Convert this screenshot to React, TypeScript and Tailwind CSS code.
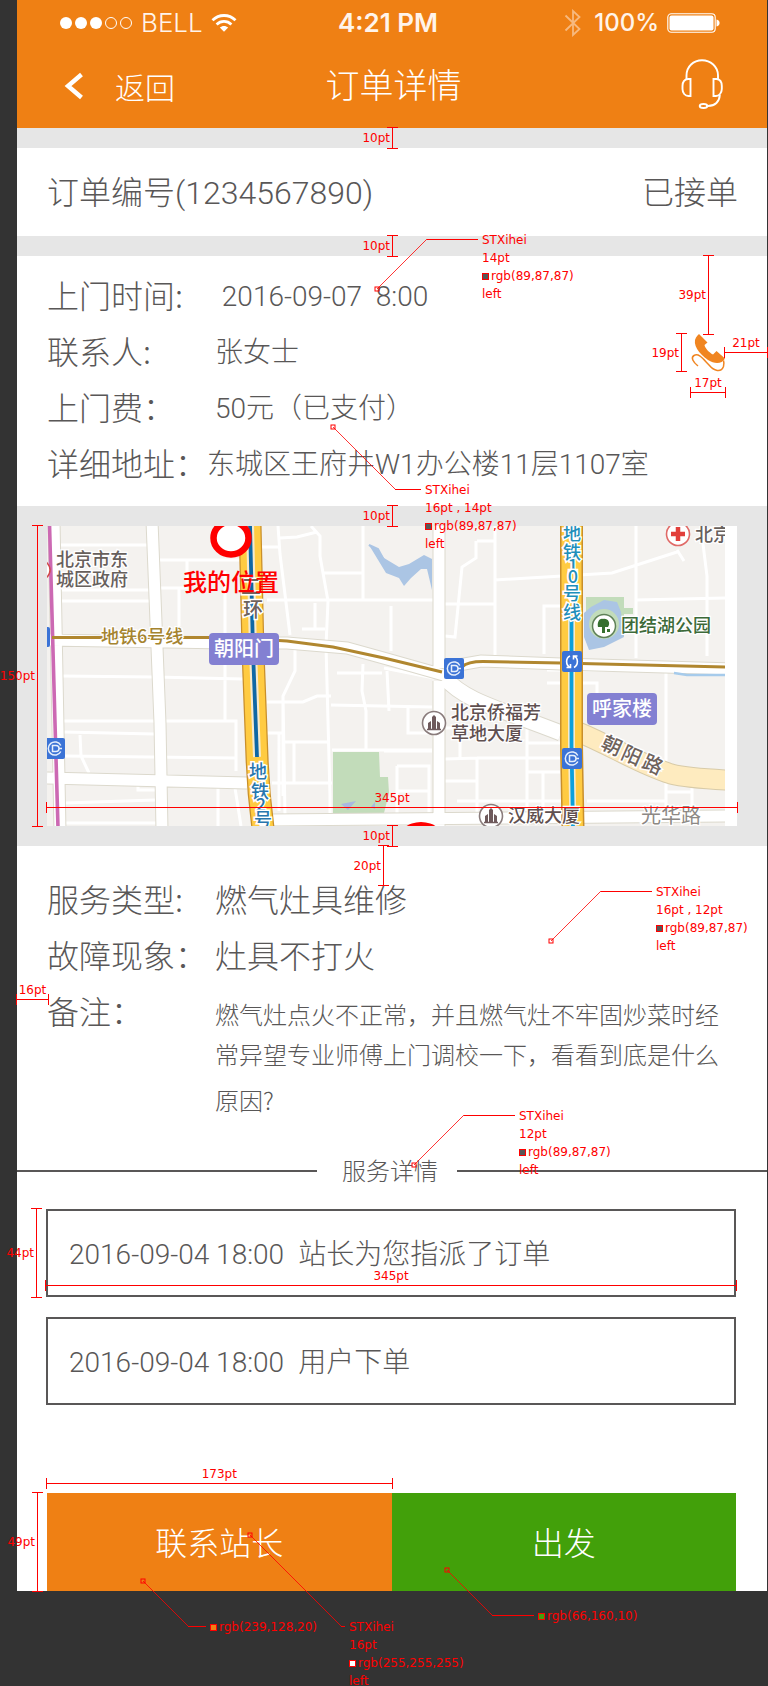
import React from "react";

/* ---------- design-spec annotations ---------- */

function VMark({ label, className }: { label: string; className: string }) {
  return (
    <div className={`pointer-events-none absolute z-10 flex items-center justify-end ${className}`}>
      <span className="-mr-[3px] shrink-0 font-['DejaVu_Sans',sans-serif] text-xs font-normal text-[#ff0000]">{label}</span>
      <span className="flex w-[11px] shrink-0 justify-center self-stretch border-y border-[#ff0000]">
        <span className="w-px bg-[#ff0000]" />
      </span>
    </div>
  );
}

function HMark({ label, className }: { label: string; className: string }) {
  return (
    <div className={`pointer-events-none absolute z-10 flex flex-col items-center ${className}`}>
      <span className="-mb-[3px] font-['DejaVu_Sans',sans-serif] text-xs leading-[14px] font-normal text-[#ff0000]">{label}</span>
      <span className="flex h-[11px] w-full items-center border-x border-[#ff0000]">
        <span className="h-px w-full bg-[#ff0000]" />
      </span>
    </div>
  );
}

type CalloutProps = {
  className: string;
  lines: string[];
  swatch: string;
  rise: number;
  run: number;
  down?: boolean;
};

function Callout({ className, lines, swatch, rise, run, down = false }: CalloutProps) {
  const w = rise + run + 3;
  const h = rise + 6;
  const y0 = down ? 3 : h - 3;
  const y1 = down ? rise + 3 : 3;
  return (
    <div className={`pointer-events-none absolute z-10 flex items-start gap-1 ${className}`}>
      <svg width={w} height={h} className="shrink-0" fill="none" stroke="#ff0000">
        <path d={`M3 ${y0}L${rise + 3} ${y1}`} strokeWidth="0.8" />
        <path d={`M${rise + 3} ${y1 + 0.5}H${w}`} />
        <rect x="1" y={y0 - 2} width="4" height="4" />
      </svg>
      <div
        className="font-['DejaVu_Sans',sans-serif] text-xs leading-[18px] font-normal whitespace-nowrap text-[#ff0000]"
        style={{ marginTop: y1 - 8 }}
      >
        {lines.map((line) =>
          line.startsWith("rgb") ? (
            <div key={line} className="flex items-center gap-0.5">
              <span className={`size-[7px] border border-[#ff0000] ${swatch}`} />
              <span>{line}</span>
            </div>
          ) : (
            <div key={line}>{line}</div>
          ),
        )}
      </div>
    </div>
  );
}

const GRAY_SPEC = "bg-[#595757]";

function GapBar() {
  return (
    <div className="relative h-5 bg-[#e6e6e6]">
      <VMark label="10pt" className="-inset-y-px right-[calc(50%-6px)]" />
    </div>
  );
}

/* ---------- header ---------- */

function StatusBar() {
  return (
    <div className="flex h-[46px] items-center pr-[50px] pl-[42px] font-[Inter,sans-serif] text-2xl text-[#fff4ea]">
      <div className="flex flex-1 items-center gap-2">
        <svg width="74" height="14" viewBox="0 0 74 14">
          <g fill="#fff">
            <circle cx="7" cy="7" r="6" />
            <circle cx="22" cy="7" r="6" />
            <circle cx="37" cy="7" r="6" />
          </g>
          <g fill="none" stroke="#fff">
            <circle cx="52" cy="7" r="5.5" />
            <circle cx="67" cy="7" r="5.5" />
          </g>
        </svg>
        <span className="text-[26px] font-light">BELL</span>
        <svg width="26" height="20" viewBox="0 0 26 20" fill="none" stroke="#fff" strokeWidth="2.8">
          <path d="M1.5 7.2C8 0.9 18 0.9 24.5 7.2" />
          <path d="M5.6 11.4C9.8 7.4 16.2 7.4 20.4 11.4" />
          <path d="M8.8 14.6C11.2 12.4 14.8 12.4 17.2 14.6L13 18.8Z" fill="#fff" stroke="none" />
        </svg>
      </div>
      <span className="text-[26px] font-semibold">4:21 PM</span>
      <div className="flex flex-1 items-center justify-end gap-2">
        <svg width="18" height="28" viewBox="0 0 18 28" fill="none" stroke="#f7b97f" strokeWidth="1.8" className="mr-1">
          <path d="M1.5 6.5L15.5 20L9 26V2L15.5 8L1.5 21.5" />
        </svg>
        <span className="font-medium">100%</span>
        <svg width="54" height="20" viewBox="0 0 54 20" className="-mr-1">
          <rect x="0.8" y="0.8" width="47.4" height="18.4" rx="3.5" fill="none" stroke="#fff" strokeWidth="1.1" />
          <rect x="2.5" y="2.5" width="44" height="15" rx="2" fill="#fff" />
          <path d="M49.5 6.5C53.6 7 53.6 13 49.5 13.5Z" fill="#fff" />
        </svg>
      </div>
    </div>
  );
}

function Header() {
  return (
    <header className="h-32 bg-[#ef8014] text-white">
      <StatusBar />
      <div className="flex h-20 items-center pr-[44px] pl-[47px]">
        <div className="flex flex-1">
          <button type="button" className="flex items-center gap-[31px] text-[30px] leading-10">
            <svg width="20" height="28" viewBox="0 0 20 28" fill="none" stroke="#fff" strokeWidth="4.4">
              <path d="M17.5 2.5L4 14L17.5 25.5" />
            </svg>
            返回
          </button>
        </div>
        <h1 className="pb-1 text-[34px] leading-10 font-light">订单详情</h1>
        <div className="flex flex-1 justify-end">
          <button type="button" aria-label="客服" className="pb-1">
            <svg width="42" height="50" viewBox="0 0 42 50" fill="none" stroke="#fff" strokeWidth="1.9">
              <path d="M5.5 20V16.5C5.5 7.5 12.5 1.2 21 1.2S37 7.5 37 16.5V20" />
              <path d="M9.5 20H7C3 20.5 1.5 24 1.5 27V30C1.5 34 4 37 7.5 37H9.5Z" />
              <path d="M32.5 20H35.5C39.5 20.5 40.8 24 40.8 27V30C40.8 34 38 37 35 37H32.5Z" />
              <path d="M38.8 36C38.5 42.5 34 47 27 47H25" />
              <ellipse cx="22.5" cy="47" rx="3.8" ry="2" />
            </svg>
          </button>
        </div>
      </div>
    </header>
  );
}

/* ---------- map ---------- */

function Metro({ x, y }: { x: number; y: number }) {
  return (
    <g transform={`translate(${x} ${y})`}>
      <rect width="20" height="21" rx="2" fill="#3b73d6" />
      <g fill="none" stroke="#e6effc" strokeWidth="1.5">
        <path d="M15.8 7.5A6.6 6.6 0 1 0 15.8 13.5" />
        <path d="M7.5 7.5H11A3 3 0 0 1 11 13.5H7.5ZM13.5 10.5H17" />
      </g>
    </g>
  );
}

function Building({ x, y }: { x: number; y: number }) {
  return (
    <g transform={`translate(${x} ${y})`}>
      <circle r="11.5" fill="#fff" stroke="#8a7c7c" strokeWidth="1.6" />
      <path d="M-6 6V0L-3 -2V6ZM-2 6V-6L0 -8L2 -6V6ZM3 6V-2L6 0V6Z" fill="#6f5a5c" />
      <path d="M-7 6.5H7" stroke="#6f5a5c" strokeWidth="1.5" />
    </g>
  );
}

const COLUMN_LEFT = [
  { t: "地", x: 211, y: 252 },
  { t: "铁", x: 213, y: 272 },
  { t: "2", x: 214, y: 285 },
  { t: "号", x: 216, y: 300 },
];
const COLUMN_RIGHT = [
  { t: "地", x: 525, y: 14 },
  { t: "铁", x: 525, y: 33 },
  { t: "1", x: 526, y: 46 },
  { t: "0", x: 526, y: 57 },
  { t: "号", x: 525, y: 74 },
  { t: "线", x: 525, y: 93 },
];

const MAJOR =
  "M7 -5L13 305M105 -5L113 197L115 305M392 -5V142M392 155V305M0 252L200 257M222 294L690 290M0 114L180 117L240 117L300 122L340 133L400 150M400 141L434 135L514 138L690 143";

const MINOR =
  "M9 19H100M10 64H104M10 75H103M110 34H193M140 34V62H112M132 62V100M178 45V195M14 150L108 151L196 153M15 195H189V245M17 206L107 208M33 209L34 230L42 247M18 230L188 232M18 277L108 274M18 297H110M171 262V300M188 262L194 300M91 260V264H110" +
  "M215 21H232M231 0L233 28L243 109M233 12L250 11L270 6M264 0L273 10V30L281 75L279 120M316 0V75M275 47H316M220 74H387M268 77V102M255 103H278M279 120L283 270V300M248 122V145L236 170V270M220 176H256L270 170H284M236 170L238 290M220 207H235M232 207V285M247 216V256M236 216H283M225 257H285M290 147H335M284 179L385 181M316 138L315 165L319 185V225M285 224L385 224" +
  "M398 78H448M448 0V130M430 15H448M429 15V32L415 41L408 111L398 110M448 54L565 47L630 26M630 24L637 35M589 0V132M589 74L678 72M655 10L660 50V130M514 80H497V128M344 80V125M340 145L342 185M337 225H385M398 233L430 232V292M413 207V233M398 255H430M398 202H430M430 232H513M480 202V290M480 217H513M480 246H513M496 246V290M337 142L387 152M361 182V207H387M350 240V290M350 240H382V290M350 265H382M410 275H514M500 157H550V185M619 144V290M500 144H678M645 260V290M619 266H646M540 275H620";

function CityMap() {
  return (
    <svg
      viewBox="0 0 678 300"
      preserveAspectRatio="xMidYMid slice"
      className="block h-[300px] w-full bg-[#f4f2ef] font-['Noto_Sans_CJK_SC',sans-serif] font-medium"
      fill="none"
    >
      <path d="M322 19L331 24L337 32L352 41L362 38L377 29L385 33V64L380 43L374 43L364 52L357 60L352 52L339 47Z" fill="#abc5e4" />
      <path d="M322 19L331 23L337 34L330 25Z" stroke="#abc5e4" strokeWidth="2" />
      <path d="M286 226H332L333 251H341L342 267L337 287H286Z" fill="#c2dcba" />
      <path d="M539 71H577V82H586V88H577V110H539Z" fill="#c2dcba" />
      <path d="M544 81L557 74L570 76L574 86L577 111L557 121L542 124L537 111V87Z" fill="#abc5e4" />
      <circle cx="557" cy="98" r="15" fill="#c2dcba" />
      <path d="M294 278L309 275L301 284ZM324 281L328 276V283Z" fill="#a9b9df" />

      <path d={MINOR} stroke="#fff" strokeWidth="3" />
      <path d={MAJOR} stroke="#dcd9cd" strokeWidth="13" />
      <path d="M398 152C418 175 450 182 514 207" stroke="#dcd9cd" strokeWidth="17" />
      <path d={MAJOR} stroke="#fff" strokeWidth="11" />
      <path d="M398 152C418 175 450 182 514 207" stroke="#fff" strokeWidth="15" />
      <path d="M531 206C565 220 592 238 624 248C640 252 660 253 680 254" stroke="#d8cba8" strokeWidth="21" />
      <path d="M531 206C565 220 592 238 624 248C640 252 660 253 680 254" stroke="#feebbf" strokeWidth="19" />
      <path d="M627 147L640 149H678" stroke="#a6cbeb" strokeWidth="2.5" />

      <path d="M2.5 -2L8 197L11 302" stroke="#cc69b3" strokeWidth="3.6" />
      <path d="M5 111.5H180L240 115L286 121L337 132L395 146" stroke="#b0872f" strokeWidth="3" />
      <path d="M415 141C420 136 428 135.5 436 135.5L514 137L678 141" stroke="#b0872f" strokeWidth="3" />

      <path d="M203 -2L206 125L210 231C211 260 213 280 216 302" stroke="#c98f2a" strokeWidth="23" />
      <path d="M203 -2L206 125L210 231C211 260 213 280 216 302" stroke="#ffcb42" strokeWidth="20.5" />
      <path d="M203 -2L206 125L210 231" stroke="#f5ead0" strokeWidth="8" />
      <path d="M203 -2L206 125L210 231" stroke="#0e67a5" strokeWidth="3.8" />
      <path d="M524.5 -2V220L526 302" stroke="#c98f2a" strokeWidth="23" />
      <path d="M524.5 -2V220L526 302" stroke="#ffcb42" strokeWidth="20" />
      <path d="M524.5 90V220L526 302" stroke="#f5ead0" strokeWidth="7" />
      <path d="M524.5 90V220L526 302" stroke="#0ba0dc" strokeWidth="3.8" />

      <rect x="-17" y="101" width="20" height="20" rx="2" fill="#3b73d6" />
      <Metro x={-2} y={212} />
      <Metro x={397} y={132} />
      <Metro x={515} y={222} />
      <rect x="515" y="125" width="20" height="21" rx="2" fill="#3b73d6" />
      <path
        d="M523 130C518.5 132 518.5 139 523 141.5M519.5 141.5H523.5V138M527 141.5C531.5 139 531.5 132 527 130M530.5 130H526.5V133.5"
        stroke="#fff"
        strokeWidth="1.6"
      />

      <circle cx="-7" cy="44" r="10" fill="#fff" stroke="#d1494b" strokeWidth="1.5" />
      <circle cx="631" cy="8" r="11.5" fill="#fff" stroke="#e06a67" strokeWidth="1.6" />
      <path d="M631 1V15M624 8H638" stroke="#e23f3b" strokeWidth="4.5" />
      <Building x={387} y={197} />
      <Building x={444} y={290} />
      <circle cx="557" cy="100" r="11.5" fill="#fff" stroke="#5f8058" strokeWidth="1.5" />
      <path d="M556 93C552 92 550 97 551 101H555V107H558V101H561C564 97 561 92 556 93ZM560 103H563V106H560Z" fill="#36702f" />

      <g fontSize="18" fill="#67605c" stroke="#fff" strokeWidth="2.5" paintOrder="stroke">
        <text x="9" y="40">北京市东</text>
        <text x="9" y="60">城区政府</text>
        <text x="404" y="193" fill="#5f5050">北京侨福芳</text>
        <text x="404" y="214" fill="#5f5050">草地大厦</text>
        <text x="461" y="296" fill="#5f5050">汉威大厦</text>
        <text x="648" y="15">北京</text>
        <text x="574" y="106" fill="#3d6a39">团结湖公园</text>
        <text x="54" y="117" fill="#a5842f">地铁6号线</text>
        <text x="594" y="297" fontSize="20" fill="#8d8985" fontWeight="400">光华路</text>
      </g>
      <g fontSize="20" fill="#6f635c" stroke="#fff" strokeWidth="3" paintOrder="stroke" textAnchor="middle">
        <text x="204" y="68">二</text>
        <text x="206" y="91">环</text>
        <text transform="translate(562 226) rotate(24)">朝</text>
        <text transform="translate(582 236) rotate(24)">阳</text>
        <text transform="translate(603 245) rotate(24)">路</text>
      </g>
      <g fontSize="18" stroke="#fff" strokeWidth="3" paintOrder="stroke" textAnchor="middle">
        {COLUMN_LEFT.map((c) => (
          <text key={c.t} x={c.x} y={c.y} fill="#2876ae">{c.t}</text>
        ))}
        {COLUMN_RIGHT.map((c) => (
          <text key={c.t} x={c.x} y={c.y} fill="#1f8fbb">{c.t}</text>
        ))}
      </g>

      <rect x="162" y="107" width="70" height="32" rx="4" fill="#8380d2" />
      <rect x="540" y="167" width="70" height="32" rx="4" fill="#8380d2" />
      <g fontSize="20" fill="#fff" textAnchor="middle">
        <text x="197" y="130">朝阳门</text>
        <text x="575" y="190">呼家楼</text>
      </g>

      <ellipse cx="184" cy="12" rx="17.5" ry="16.5" fill="#fff" stroke="#ff0000" strokeWidth="6.5" />
      <ellipse cx="374" cy="316" rx="24" ry="20" fill="#ff0000" />
      <text x="136" y="65" fontSize="24" fill="#ff0000">我的位置</text>
    </svg>
  );
}

/* ---------- page ---------- */

const MIXED = "pt-1.5 font-[Roboto,'Noto_Sans_CJK_SC',sans-serif] text-[28px]";

type RowProps = { label: string; children: React.ReactNode; labelWidth?: string; valueStyle?: string };

function Row({ label, children, labelWidth = "w-[168px]", valueStyle = MIXED }: RowProps) {
  return (
    <div className="flex h-14 items-center pb-1">
      <dt className={`shrink-0 text-[32px] ${labelWidth}`}>{label}</dt>
      <dd className={`whitespace-pre ${valueStyle}`}>{children}</dd>
    </div>
  );
}

const EVENTS = [
  { time: "2016-09-04 18:00", text: "站长为您指派了订单" },
  { time: "2016-09-04 18:00", text: "用户下单" },
];

export default function App() {
  return (
    <div className="relative min-h-screen overflow-hidden bg-[#333333] pr-px pl-[17px] font-['Noto_Sans_CJK_SC',sans-serif] font-light text-[#595757]">
      <main className="bg-white">
        <Header />
        <GapBar />
        <section className="flex h-[88px] items-center justify-between pr-[29px] pb-1 pl-[30px] text-[32px]">
          <span className="pt-1.5 font-[Roboto,'Noto_Sans_CJK_SC',sans-serif]">订单编号(1234567890)</span>
          <span>已接单</span>
        </section>
        <GapBar />

        <section className="relative pt-3 pb-3.5 pl-[30px]">
          <dl>
            <Row label="上门时间:">{" 2016-09-07  8:00"}</Row>
            <Row label="联系人:">张女士</Row>
            <Row label="上门费：">50元（已支付）</Row>
            <Row label="详细地址：" labelWidth="w-[160px]">东城区王府井W1办公楼11层1107室</Row>
          </dl>
          <a href="tel:01000000000" aria-label="拨打电话" className="absolute top-[77px] right-[41px]">
            <svg width="36" height="40" viewBox="0 0 36 40">
              <path
                d="M9 1L17.5 9.5L14.5 12C15 15 19 19.5 23 21.5L26.5 18L35 25.5C32 31 25 31.5 18 27C9 21 2 11 6 4.5C7 3 8 2 9 1Z"
                fill="#f08521"
              />
              <path
                d="M8 33C3 29 0.5 24.5 4 22.5C9 19.5 14 27 19 32C24 38 31 40 33.5 33.5C34.2 31 34 29 33.5 27.5"
                fill="none"
                stroke="#f08521"
                strokeWidth="1.5"
              />
            </svg>
          </a>
          <Callout
            className="-top-[20px] left-[357px]"
            lines={["STXihei", "14pt", "rgb(89,87,87)", "left"]}
            swatch={GRAY_SPEC}
            rise={50}
            run={51}
          />
          <Callout
            className="top-[168px] left-[313px]"
            lines={["STXihei", "16pt , 14pt", "rgb(89,87,87)", "left"]}
            swatch={GRAY_SPEC}
            rise={62}
            run={26}
            down
          />
          <VMark label="39pt" className="-top-px right-[53px] h-[80px]" />
          <VMark label="19pt" className="top-[77px] right-[80px] h-[39px]" />
          <HMark label="21pt" className="top-[80px] -right-px w-[44px]" />
          <HMark label="17pt" className="top-[120px] right-[41px] w-[36px]" />
        </section>

        <section className="relative bg-[#e6e6e6]">
          <GapBar />
          <div className="relative px-[30px]">
            <div className="bg-white pr-3">
              <CityMap />
            </div>
            <VMark label="150pt" className="-inset-y-px -left-[17px] w-[43px]" />
            <HMark label="345pt" className="inset-x-[29px] top-[265px]" />
          </div>
          <GapBar />
        </section>

        <section className="relative pt-[26px] pl-[30px]">
          <dl>
            <Row label="服务类型:" valueStyle="text-[32px]">燃气灶具维修</Row>
            <Row label="故障现象：" valueStyle="text-[32px]">灶具不打火</Row>
            <div className="flex">
              <dt className="flex h-14 w-[168px] shrink-0 items-center pb-1 text-[32px]">备注：</dt>
              <dd className="pt-2.5 pr-8 text-2xl leading-10">
                <p>燃气灶点火不正常，并且燃气灶不牢固炒菜时经常异望专业师傅上门调校一下，看看到底是什么</p>
                <p className="leading-[52px]">原因?</p>
              </dd>
            </div>
          </dl>
          <VMark label="20pt" className="-top-px right-[378px] h-[41px]" />
          <HMark label="16pt" className="top-[137px] -left-px w-[33px]" />
          <Callout
            className="top-[42px] left-[531px]"
            lines={["STXihei", "16pt , 12pt", "rgb(89,87,87)", "left"]}
            swatch={GRAY_SPEC}
            rise={50}
            run={51}
          />
          <Callout
            className="top-[266px] left-[394px]"
            lines={["STXihei", "12pt", "rgb(89,87,87)", "left"]}
            swatch={GRAY_SPEC}
            rise={50}
            run={51}
          />
        </section>

        <section>
          <div className="mt-[25px] mb-[18px] flex h-10 items-center">
            <span className="h-0.5 w-[300px] bg-[#595757]" />
            <h2 className="w-[140px] shrink-0 pb-0.5 pl-[25px] text-2xl font-light">服务详情</h2>
            <span className="h-0.5 flex-1 bg-[#595757]" />
          </div>
          <div className="relative mr-[31px] ml-[29px]">
            <ul className="flex flex-col gap-5">
              {EVENTS.map((e) => (
                <li
                  key={e.text}
                  className="flex h-[88px] items-center gap-3.5 border-2 border-[#595757] px-[21px] pt-1 font-[Roboto,'Noto_Sans_CJK_SC',sans-serif] text-[28px]"
                >
                  <time>{e.time}</time>
                  <span>{e.text}</span>
                </li>
              ))}
            </ul>
            <VMark label="44pt" className="-top-px -left-[46px] h-[90px] w-[42px]" />
            <HMark label="345pt" className="-inset-x-px top-[60px]" />
          </div>
        </section>

        <div className="relative mt-[88px] mr-[31px] ml-[30px]">
          <div className="grid grid-cols-2 text-[32px] text-white">
            <button type="button" className="h-[98px] bg-[#ef8014] pb-0.5">联系站长</button>
            <button type="button" className="h-[98px] bg-[#42a00a] pb-0.5">出发</button>
          </div>
          <HMark label="173pt" className="-top-[26px] -left-px w-[calc(50%+2px)]" />
          <VMark label="49pt" className="-inset-y-px -left-[47px] w-[43px]" />
          <Callout
            className="top-[39px] left-[200px]"
            lines={["STXihei", "16pt", "rgb(255,255,255)", "left"]}
            swatch="bg-white"
            rise={91}
            run={4}
            down
          />
          <Callout
            className="top-[85px] left-[93px]"
            lines={["rgb(239,128,20)"]}
            swatch="bg-[#ef8014]"
            rise={45}
            run={18}
            down
          />
          <Callout
            className="top-[74px] left-[397px]"
            lines={["rgb(66,160,10)"]}
            swatch="bg-[#42a00a]"
            rise={45}
            run={42}
            down
          />
        </div>
      </main>
      <footer className="h-[95px]" />
    </div>
  );
}
